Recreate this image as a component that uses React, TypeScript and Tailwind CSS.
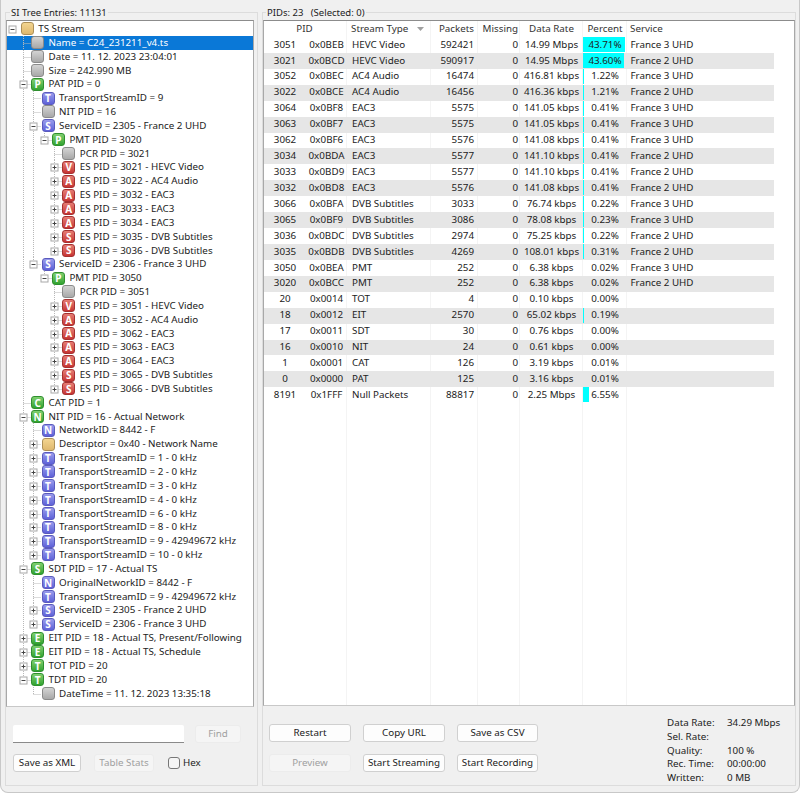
type IconKind = "gray" | "folder" | "green" | "blue" | "red";
type TreeRow = [number, IconKind, string, string, "-" | "+" | ""];

const rows: TreeRow[] = [
  [0, "folder", "", "TS Stream", "-"],
  [1, "gray", "", "Name = C24_231211_v4.ts", ""],
  [1, "gray", "", "Date = 11. 12. 2023 23:04:01", ""],
  [1, "gray", "", "Size = 242.990 MB", ""],
  [1, "green", "P", "PAT PID = 0", "-"],
  [2, "blue", "T", "TransportStreamID = 9", ""],
  [2, "gray", "", "NIT PID = 16", ""],
  [2, "blue", "S", "ServiceID = 2305 - France 2 UHD", "-"],
  [3, "green", "P", "PMT PID = 3020", "-"],
  [4, "gray", "", "PCR PID = 3021", ""],
  [4, "red", "V", "ES PID = 3021 - HEVC Video", "+"],
  [4, "red", "A", "ES PID = 3022 - AC4 Audio", "+"],
  [4, "red", "A", "ES PID = 3032 - EAC3", "+"],
  [4, "red", "A", "ES PID = 3033 - EAC3", "+"],
  [4, "red", "A", "ES PID = 3034 - EAC3", "+"],
  [4, "red", "S", "ES PID = 3035 - DVB Subtitles", "+"],
  [4, "red", "S", "ES PID = 3036 - DVB Subtitles", "+"],
  [2, "blue", "S", "ServiceID = 2306 - France 3 UHD", "-"],
  [3, "green", "P", "PMT PID = 3050", "-"],
  [4, "gray", "", "PCR PID = 3051", ""],
  [4, "red", "V", "ES PID = 3051 - HEVC Video", "+"],
  [4, "red", "A", "ES PID = 3052 - AC4 Audio", "+"],
  [4, "red", "A", "ES PID = 3062 - EAC3", "+"],
  [4, "red", "A", "ES PID = 3063 - EAC3", "+"],
  [4, "red", "A", "ES PID = 3064 - EAC3", "+"],
  [4, "red", "S", "ES PID = 3065 - DVB Subtitles", "+"],
  [4, "red", "S", "ES PID = 3066 - DVB Subtitles", "+"],
  [1, "green", "C", "CAT PID = 1", ""],
  [1, "green", "N", "NIT PID = 16 - Actual Network", "-"],
  [2, "blue", "N", "NetworkID = 8442 - F", ""],
  [2, "folder", "", "Descriptor = 0x40 - Network Name", "+"],
  [2, "blue", "T", "TransportStreamID = 1 - 0 kHz", "+"],
  [2, "blue", "T", "TransportStreamID = 2 - 0 kHz", "+"],
  [2, "blue", "T", "TransportStreamID = 3 - 0 kHz", "+"],
  [2, "blue", "T", "TransportStreamID = 4 - 0 kHz", "+"],
  [2, "blue", "T", "TransportStreamID = 6 - 0 kHz", "+"],
  [2, "blue", "T", "TransportStreamID = 8 - 0 kHz", "+"],
  [2, "blue", "T", "TransportStreamID = 9 - 42949672 kHz", "+"],
  [2, "blue", "T", "TransportStreamID = 10 - 0 kHz", "+"],
  [1, "green", "S", "SDT PID = 17 - Actual TS", "-"],
  [2, "blue", "N", "OriginalNetworkID = 8442 - F", ""],
  [2, "blue", "T", "TransportStreamID = 9 - 42949672 kHz", ""],
  [2, "blue", "S", "ServiceID = 2305 - France 2 UHD", "+"],
  [2, "blue", "S", "ServiceID = 2306 - France 3 UHD", "+"],
  [1, "green", "E", "EIT PID = 18 - Actual TS, Present/Following", "+"],
  [1, "green", "E", "EIT PID = 18 - Actual TS, Schedule", "+"],
  [1, "green", "T", "TOT PID = 20", "+"],
  [1, "green", "T", "TDT PID = 20", "-"],
  [2, "gray", "", "DateTime = 11. 12. 2023 13:35:18", ""],
];

const pids: [string, string, string, string, string, string, number, string][] = [
  ["3051", "0x0BEB", "HEVC Video", "592421", "0", "14.99 Mbps", 43.71, "France 3 UHD"],
  ["3021", "0x0BCD", "HEVC Video", "590917", "0", "14.95 Mbps", 43.6, "France 2 UHD"],
  ["3052", "0x0BEC", "AC4 Audio", "16474", "0", "416.81 kbps", 1.22, "France 3 UHD"],
  ["3022", "0x0BCE", "AC4 Audio", "16456", "0", "416.36 kbps", 1.21, "France 2 UHD"],
  ["3064", "0x0BF8", "EAC3", "5575", "0", "141.05 kbps", 0.41, "France 3 UHD"],
  ["3063", "0x0BF7", "EAC3", "5575", "0", "141.05 kbps", 0.41, "France 3 UHD"],
  ["3062", "0x0BF6", "EAC3", "5576", "0", "141.08 kbps", 0.41, "France 3 UHD"],
  ["3034", "0x0BDA", "EAC3", "5577", "0", "141.10 kbps", 0.41, "France 2 UHD"],
  ["3033", "0x0BD9", "EAC3", "5577", "0", "141.10 kbps", 0.41, "France 2 UHD"],
  ["3032", "0x0BD8", "EAC3", "5576", "0", "141.08 kbps", 0.41, "France 2 UHD"],
  ["3066", "0x0BFA", "DVB Subtitles", "3033", "0", "76.74 kbps", 0.22, "France 3 UHD"],
  ["3065", "0x0BF9", "DVB Subtitles", "3086", "0", "78.08 kbps", 0.23, "France 3 UHD"],
  ["3036", "0x0BDC", "DVB Subtitles", "2974", "0", "75.25 kbps", 0.22, "France 2 UHD"],
  ["3035", "0x0BDB", "DVB Subtitles", "4269", "0", "108.01 kbps", 0.31, "France 2 UHD"],
  ["3050", "0x0BEA", "PMT", "252", "0", "6.38 kbps", 0.02, "France 3 UHD"],
  ["3020", "0x0BCC", "PMT", "252", "0", "6.38 kbps", 0.02, "France 2 UHD"],
  ["20", "0x0014", "TOT", "4", "0", "0.10 kbps", 0, ""],
  ["18", "0x0012", "EIT", "2570", "0", "65.02 kbps", 0.19, ""],
  ["17", "0x0011", "SDT", "30", "0", "0.76 kbps", 0, ""],
  ["16", "0x0010", "NIT", "24", "0", "0.61 kbps", 0, ""],
  ["1", "0x0001", "CAT", "126", "0", "3.19 kbps", 0.01, ""],
  ["0", "0x0000", "PAT", "125", "0", "3.16 kbps", 0.01, ""],
  ["8191", "0x1FFF", "Null Packets", "88817", "0", "2.25 Mbps", 6.55, ""],
];

const iconClass: Record<IconKind, string> = {
  gray: "border-[#8a8a8a] bg-linear-to-b from-[#d4d4d4] to-[#a8a8a8]",
  folder: "border-[#ad9058] bg-linear-to-b from-[#f3d590] to-[#dfb86e]",
  green: "border-[#2f8f2f] bg-linear-to-b from-[#7fd06f] to-[#2fa32f]",
  blue: "border-[#5a5abd] bg-linear-to-b from-[#9a9cec] to-[#5f61d8]",
  red: "border-[#a53030] bg-linear-to-b from-[#e57c74] to-[#c63333]",
};

const ROW_H = 13.85;
const INDENT = 10.4;

// guide carries on through row i if a later sibling exists at that level
const hasNext = (i: number, level: number) => {
  for (let j = i + 1; j < rows.length; j++) {
    if (rows[j][0] < level) return false;
    if (rows[j][0] === level) return true;
  }
  return false;
};

const TreeGuides = ({ i }: { i: number }) => {
  const [depth, , , , exp] = rows[i];
  const cx = (d: number) => Math.round(5.3 + INDENT * d) + 0.5;
  const x = cx(depth);
  const w = 5.3 + INDENT * depth + 8.4;
  const mid = Math.round(ROW_H / 2) + 0.5;
  return (
    <svg width={w} height={ROW_H} className="shrink-0 block" fill="none">
      {Array.from({ length: depth }, (_, l) => l + 1).map((l) =>
        l < depth && hasNext(i, l) ? (
          <line key={l} x1={cx(l)} x2={cx(l)} y1={0} y2={ROW_H} stroke="#b8b8b8" strokeDasharray="1 1" />
        ) : null
      )}
      {depth > 0 && (
        <>
          <line x1={x} x2={x} y1={0} y2={hasNext(i, depth) ? ROW_H : mid} stroke="#b8b8b8" strokeDasharray="1 1" />
          <line x1={x} x2={x + 8} y1={mid} y2={mid} stroke="#b8b8b8" strokeDasharray="1 1" />
        </>
      )}
      {exp && (
        <>
          <rect x={x - 3.5} y={mid - 3.5} width={7} height={7} fill="#fff" stroke="#a8a8a8" />
          <line x1={x - 2} x2={x + 2} y1={mid} y2={mid} stroke="#444" />
          {exp === "+" && <line x1={x} x2={x} y1={mid - 2} y2={mid + 2} stroke="#444" />}
        </>
      )}
    </svg>
  );
};

const TreeIcon = ({ kind, letter }: { kind: IconKind; letter: string }) => (
  <span
    className={`shrink-0 w-[13px] h-[13px] rounded-[3px] border flex items-center justify-center text-white font-bold text-[10px] leading-none ${iconClass[kind]}`}
  >
    {letter}
  </span>
);

const Btn = ({ label, className, disabled }: { label: string; className?: string; disabled?: boolean }) => (
  <button
    className={`h-[18px] rounded-[3px] border text-[9.8px] leading-none flex items-center justify-center ${
      disabled ? "border-[#ececec] bg-[#f5f5f5] text-[#a0a0a0]" : "border-[#d0d0d0] bg-[#fdfdfd] text-[#1a1a1a]"
    } ${className ?? ""}`}
  >
    {label}
  </button>
);

const App = () => {
  return (
    <div className="w-[800px] h-[793px] bg-[#f0f0f0] text-[#222] text-[9.8px] flex gap-[4px] pl-[4px] pr-[3px] pt-[6px] pb-[6px] rounded-b-[8px] border-x border-b border-[#c8c8c8] font-['Noto_Sans','Open_Sans',sans-serif] overflow-hidden">
      {/* left panel */}
      <fieldset className="w-[253px] shrink-0 border border-[#dcdcdc] flex flex-col min-w-0">
        <legend className="ml-[4px] px-[1px] leading-[13px] text-[9.5px]">SI Tree Entries: 11131</legend>
        <div className="mt-[1px] mr-[3px] h-[687px] bg-white border border-[#a8a8a8] border-t-[#8c8c8c] border-b-[#c8c8c8] overflow-hidden pt-[1px]">
          {rows.map((r, i) => (
            <div
              key={i}
              className={`flex items-center h-[13.85px] whitespace-nowrap ${i === 1 ? "bg-[#0a78d7] text-white" : ""}`}
            >
              <TreeGuides i={i} />
              <TreeIcon kind={r[1]} letter={r[2]} />
              <span className="pl-[4.5px] leading-[13.85px]">{r[3]}</span>
            </div>
          ))}
        </div>
        <div className="flex items-center mt-[18px] pl-[7px]">
          <input className="w-[171px] h-[18px] bg-white border-b border-b-[#8a8a8a] rounded-t-[2px]" />
          <Btn label="Find" className="w-[46px] ml-[11px]" disabled />
        </div>
        <div className="flex items-center mt-[11px] pl-[7px]">
          <Btn label="Save as XML" className="w-[68px]" />
          <Btn label="Table Stats" className="w-[60px] ml-[13px]" disabled />
          <span className="ml-[14px] w-[12px] h-[12px] rounded-[3px] border border-[#777] bg-[#f5f5f5]" />
          <span className="ml-[3px]">Hex</span>
        </div>
      </fieldset>

      {/* right panel */}
      <fieldset className="flex-1 border border-[#dcdcdc] flex flex-col min-w-0">
        <legend className="ml-[3px] px-[1px] leading-[13px] text-[9.5px] whitespace-pre">PIDs: 23{"   "}(Selected: 0)</legend>
        <div className="mt-[1px] h-[687px] bg-white border border-[#a8a8a8] border-t-[#8c8c8c] border-b-[#c8c8c8] overflow-hidden relative">
          <div className="absolute inset-0 flex">
            <div className="w-[83px] border-r border-[#f4f4f4]" />
            <div className="w-[84px] border-r border-[#f4f4f4]" />
            <div className="w-[47px] border-r border-[#f4f4f4]" />
            <div className="w-[42px] border-r border-[#f4f4f4]" />
            <div className="w-[63px] border-r border-[#f4f4f4]" />
            <div className="w-[44px] border-r border-[#f4f4f4]" />
          </div>
          <div className="relative flex h-[16px] items-center text-[#333]">
            <div className="w-[83px] text-center pr-[2px]">PID</div>
            <div className="w-[84px] pl-[4px] flex items-center gap-[9px]">
              Stream Type
              <svg width="7" height="4" viewBox="0 0 7 4"><path d="M0 0h7L3.5 4z" fill="#a0a0a0" /></svg>
            </div>
            <div className="w-[47px] text-right pr-[4px]">Packets</div>
            <div className="w-[42px] text-right pr-[2px]">Missing</div>
            <div className="w-[63px] text-center">Data Rate</div>
            <div className="w-[44px] text-center">Percent</div>
            <div className="pl-[3px]">Service</div>
          </div>
          {pids.map((p, i) => (
            <div
              key={p[0]}
              className={`relative w-[510px] h-[15.93px] flex items-center whitespace-nowrap ${
                i % 2 === 1 ? "bg-[#e6e6e6]" : ""
              }`}
            >
              <span className="w-[42px] text-center">{p[0]}</span>
              <span className="w-[41px] text-center">{p[1]}</span>
              <span className="w-[84px] pl-[5px]">{p[2]}</span>
              <span className="w-[47px] text-right pr-[4px]">{p[3]}</span>
              <span className="w-[42px] text-right pr-[2px]">{p[4]}</span>
              <span className="w-[63px] text-center">{p[5]}</span>
              <span className="w-[44px] h-full flex items-center justify-center relative">
                <span className="absolute left-0 top-0 bottom-[1px] bg-[#00ffff]" style={{ width: p[6] * 0.95 }} />
                <span className="relative">{p[6].toFixed(2)}%</span>
              </span>
              <span className="pl-[3.5px]">{p[7]}</span>
            </div>
          ))}
        </div>
        <div className="flex items-start mt-[18px] pl-[6px]">
          <div className="grid grid-cols-[82px_82px_81px] gap-x-[12px] gap-y-[12px]">
            <Btn label="Restart" />
            <Btn label="Copy URL" />
            <Btn label="Save as CSV" />
            <Btn label="Preview" disabled />
            <Btn label="Start Streaming" />
            <Btn label="Start Recording" />
          </div>
          <div className="ml-[129px] -mt-[8px] grid grid-cols-[60px_auto] leading-[13.8px] whitespace-nowrap">
            <span>Data Rate:</span><span>34.29 Mbps</span>
            <span>Sel. Rate:</span><span></span>
            <span>Quality:</span><span>100 %</span>
            <span>Rec. Time:</span><span>00:00:00</span>
            <span>Written:</span><span>0 MB</span>
          </div>
        </div>
      </fieldset>
    </div>
  );
};

export default App;
